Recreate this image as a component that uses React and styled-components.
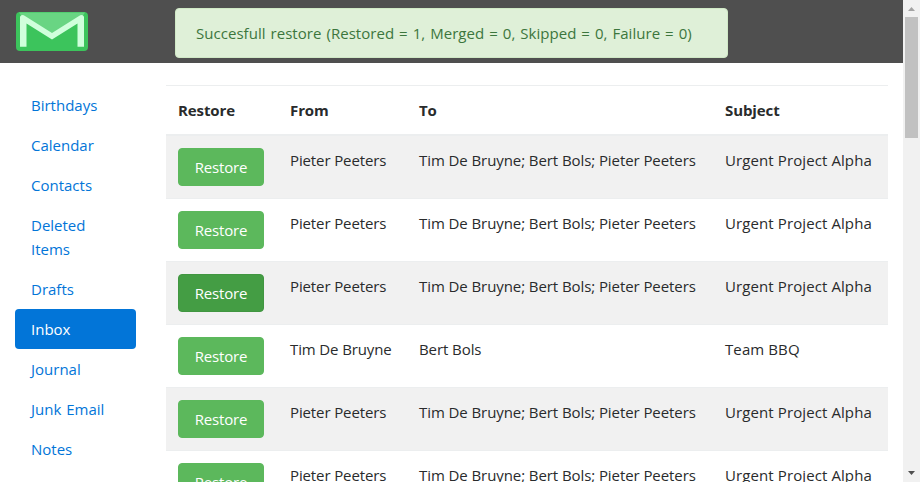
import React from "react";
import styled, { createGlobalStyle } from "styled-components";

const GlobalStyle = createGlobalStyle`
  *, *::before, *::after { box-sizing: border-box; }
  html, body { margin: 0; overflow: hidden; background: #fff; }
  body {
    font-family: "Open Sans", "Noto Sans", sans-serif;
    font-size: 15px;
    line-height: 24px;
    color: #292b2c;
  }
`;

const Window = styled.div`
  display: grid;
  grid-template-columns: 1fr 17px;
  height: 482px;
  overflow: hidden;
`;

const Page = styled.div`
  display: flex;
  flex-direction: column;
  height: 482px;
  min-width: 0;
  overflow: hidden;
`;

const Header = styled.header`
  flex: none;
  display: flex;
  align-items: flex-start;
  height: 63px;
  padding: 8px 15px 0 16px;
  background: #4f4f4f;
`;

const Logo = styled.svg`
  display: block;
  flex: none;
  width: 72px;
  height: 39px;
  margin: 4px 87px 0 0;
`;

const Alert = styled.div`
  width: 553px;
  height: 50px;
  padding: 12px 20px;
  border: 1px solid #d0e9c6;
  border-radius: 4px;
  background: #dff0d8;
  color: #3c763d;
  letter-spacing: 0.04px;
  word-spacing: 1.03px;
  white-space: nowrap;
`;

const Body = styled.div`
  flex: none;
  display: flex;
  align-items: flex-start;
  gap: 30px;
  padding: 22px 15px 0;
`;

const Nav = styled.nav`
  flex: none;
  display: flex;
  flex-direction: column;
  width: 121px;
`;

const NavLink = styled.a`
  padding: 8px 16px;
  border-radius: 4px;
  color: ${(p) => (p.$active ? "#fff" : "#0275d8")};
  background: ${(p) => (p.$active ? "#0275d8" : "transparent")};
  text-decoration: none;
  word-spacing: 1px;
`;

const Table = styled.table`
  width: 722px;
  table-layout: fixed;
  border-collapse: separate;
  border-spacing: 0;
`;

const Col = styled.col`
  width: ${(p) => p.$width}px;
`;

const HeadCell = styled.th`
  height: 51px;
  padding: 13px 12px 12px;
  border-top: 1px solid #eceeef;
  border-bottom: 2px solid #eceeef;
  text-align: left;
  font-weight: 700;
  line-height: 23px;
  letter-spacing: -0.1px;
`;

const Row = styled.tr`
  background: ${(p) => (p.$striped ? "#f1f1f1" : "#fff")};
`;

const Cell = styled.td`
  height: 63px;
  padding: 12px 0 12px 12px;
  border-bottom: 1px solid #eceeef;
  vertical-align: top;
  white-space: nowrap;
  letter-spacing: ${(p) => p.$tracking ?? 0}px;
`;

const Button = styled.button`
  display: block;
  width: 86px;
  height: 38px;
  padding: 0;
  border: 1px solid ${(p) => (p.$pressed ? "#419641" : "#5cb85c")};
  border-radius: 4px;
  background: ${(p) => (p.$pressed ? "#449d44" : "#5cb85c")};
  color: #fff;
  font: inherit;
  letter-spacing: -0.2px;
`;

const Scrollbar = styled.div`
  display: flex;
  flex-direction: column;
  align-items: center;
  height: 482px;
  background: #f1f1f1;
`;

const ArrowBox = styled.svg`
  display: block;
  flex: none;
  width: 17px;
  height: 17px;
`;

const Thumb = styled.div`
  width: 13px;
  height: 121px;
  margin-bottom: auto;
  background: #c1c1c1;
`;

const folders = [
  "Birthdays", "Calendar", "Contacts", "Deleted Items", "Drafts",
  "Inbox", "Journal", "Junk Email", "Notes",
];

const everyone = "Tim De Bruyne; Bert Bols; Pieter Peeters";
const alpha = { from: "Pieter Peeters", to: everyone, subject: "Urgent Project Alpha" };
const mails = [
  alpha,
  alpha,
  { ...alpha, pressed: true },
  { from: "Tim De Bruyne", to: "Bert Bols", subject: "Team BBQ" },
  alpha,
  alpha,
];

export default function App() {
  return (
    <>
      <GlobalStyle />
      <Window>
        <Page>
          <Header>
            <Logo viewBox="0 0 72 39">
              <rect width="72" height="39" rx="4" fill="#3cc45c" />
              <path d="M3 .5H69L66 5 36 25 6 5Z" fill="#69d583" />
              <path d="M4 34.7V5.5Q4 3 6.5 3 7.7 3 9 3.9L36 21 63 3.9Q64.3 3 65.5 3 68 3 68 5.5V34.7H61.5V11.5L36 27.6 10.5 11.5V34.7Z" fill="#d0ffdc" />
            </Logo>
            <Alert>Succesfull restore (Restored = 1, Merged = 0, Skipped = 0, Failure = 0)</Alert>
          </Header>
          <Body>
            <Nav>
              {folders.map((name) => (
                <NavLink key={name} $active={name === "Inbox"}>{name}</NavLink>
              ))}
            </Nav>
            <Table>
              <colgroup>
                <Col $width={112} />
                <Col $width={129} />
                <Col $width={306} />
                <Col $width={175} />
              </colgroup>
              <thead>
                <tr>
                  <HeadCell>Restore</HeadCell>
                  <HeadCell>From</HeadCell>
                  <HeadCell>To</HeadCell>
                  <HeadCell>Subject</HeadCell>
                </tr>
              </thead>
              <tbody>
                {mails.map((mail, i) => (
                  <Row key={i} $striped={i % 2 === 0}>
                    <Cell><Button $pressed={mail.pressed}>Restore</Button></Cell>
                    <Cell $tracking={-0.12}>{mail.from}</Cell>
                    <Cell $tracking={-0.08}>{mail.to}</Cell>
                    <Cell $tracking={0.1}>{mail.subject}</Cell>
                  </Row>
                ))}
              </tbody>
            </Table>
          </Body>
        </Page>
        <Scrollbar>
          <ArrowBox viewBox="0 0 17 17"><path d="M5 11 8.5 7 12 11Z" fill="#a3a3a3" /></ArrowBox>
          <Thumb />
          <ArrowBox viewBox="0 0 17 17"><path d="M5 6 8.5 10 12 6Z" fill="#505050" /></ArrowBox>
        </Scrollbar>
      </Window>
    </>
  );
}
